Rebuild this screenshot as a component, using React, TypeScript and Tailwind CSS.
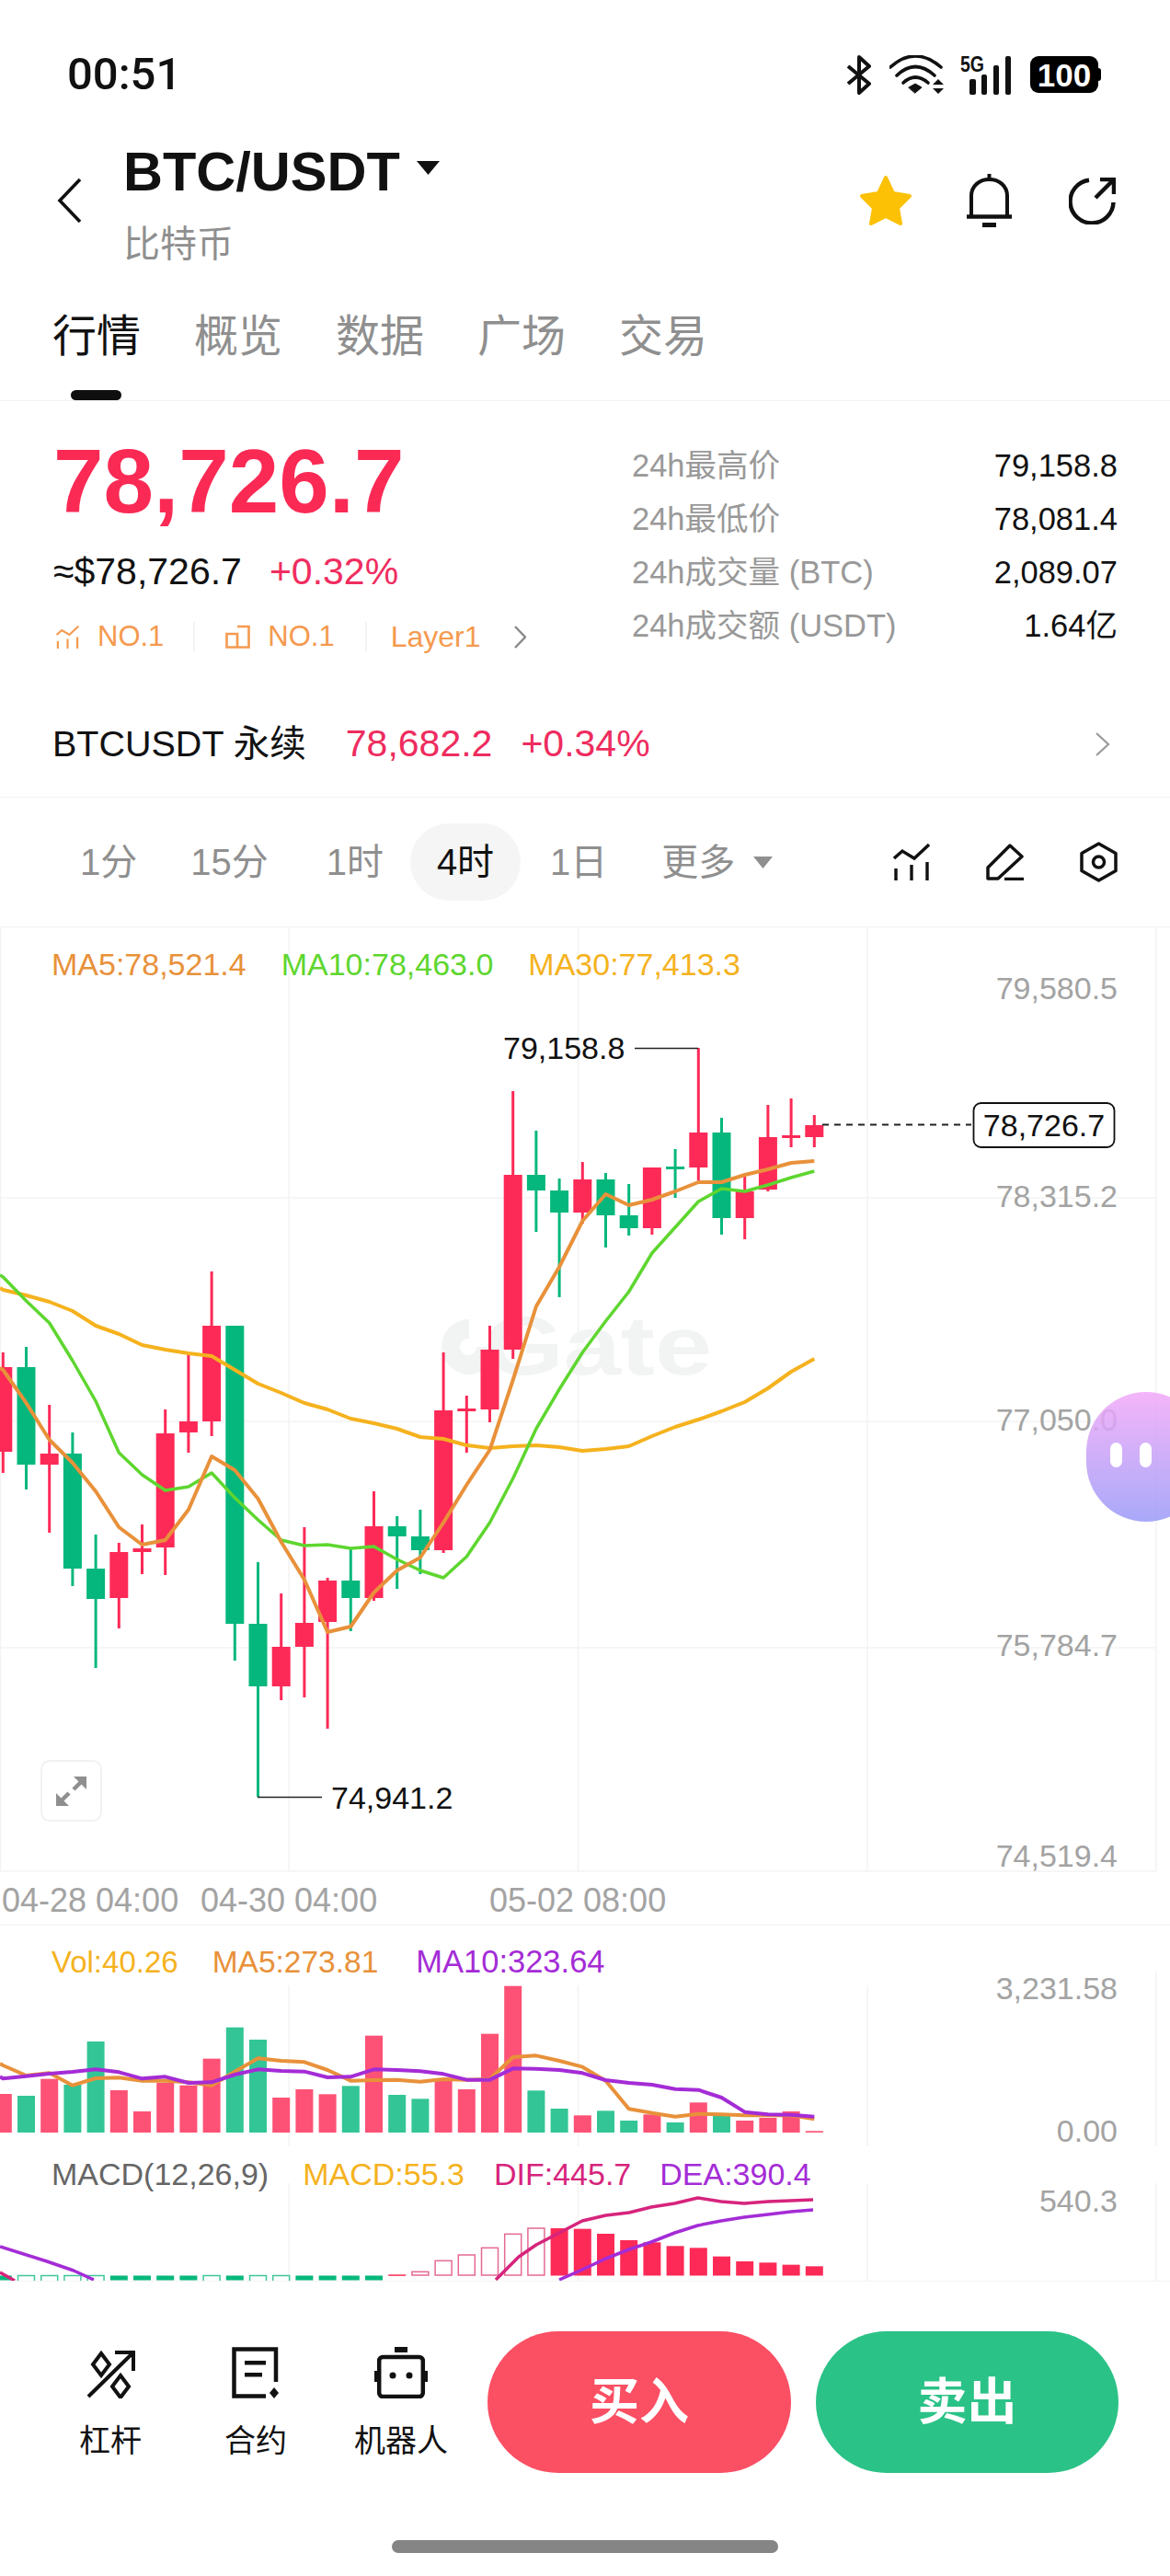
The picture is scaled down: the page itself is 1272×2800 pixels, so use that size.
const RED = "#fd2a57";
const GREEN = "#05b77c";
const VOL_RED = "#fd5275";
const VOL_GREEN = "#33c596";
const MA_ORANGE = "#e8913a";
const MA_GREEN = "#5ed62f";
const MA_YELLOW = "#f5b21e";
const PURPLE = "#a42cd6";
const MAGENTA = "#d6247c";
const GRID = "#f3f3f3";
const AXIS = "#a3a3a3";

const slotX = (i: number) => 3.3 + 25.2 * i;

// [up, high, bodyTop, bodyBottom, low]
const candles: [boolean, number, number, number, number][] = [
  [true, 1470, 1486, 1578, 1601],
  [false, 1464, 1486, 1592, 1619],
  [true, 1527, 1580, 1592, 1666],
  [false, 1557, 1580, 1705, 1724],
  [false, 1668, 1705, 1738, 1813],
  [true, 1677, 1687, 1737, 1770],
  [true, 1657, 1683, 1687, 1711],
  [true, 1532, 1558, 1682, 1712],
  [true, 1471, 1545, 1557, 1579],
  [true, 1382, 1441, 1545, 1561],
  [false, 1441, 1441, 1765, 1805],
  [false, 1698, 1765, 1833, 1953],
  [true, 1732, 1790, 1833, 1848],
  [true, 1660, 1764, 1790, 1845],
  [true, 1715, 1718, 1763, 1879],
  [false, 1683, 1718, 1737, 1773],
  [true, 1621, 1659, 1737, 1740],
  [false, 1648, 1659, 1670, 1727],
  [false, 1641, 1670, 1685, 1711],
  [true, 1470, 1533, 1685, 1688],
  [true, 1517, 1531, 1533, 1579],
  [true, 1441, 1467, 1532, 1546],
  [true, 1186, 1277, 1467, 1477],
  [false, 1229, 1277, 1294, 1339],
  [false, 1281, 1294, 1318, 1410],
  [true, 1263, 1282, 1318, 1330],
  [false, 1275, 1282, 1321, 1356],
  [false, 1287, 1321, 1335, 1343],
  [true, 1269, 1269, 1335, 1342],
  [false, 1249, 1268, 1271, 1302],
  [true, 1139, 1231, 1269, 1283],
  [false, 1215, 1231, 1324, 1342],
  [true, 1279, 1295, 1324, 1347],
  [true, 1201, 1236, 1293, 1295],
  [true, 1194, 1234, 1237, 1247],
  [true, 1212, 1223, 1236, 1247],
];

const ma5 = [1489, 1525, 1565, 1590, 1621, 1660, 1679, 1674, 1641, 1583, 1598, 1629, 1676, 1717, 1774, 1768, 1731, 1707, 1693, 1655, 1614, 1576, 1500, 1420, 1377, 1327, 1298, 1310, 1304, 1295, 1285, 1285, 1277, 1271, 1264, 1262];
const ma10 = [1388, 1414, 1438, 1479, 1523, 1579, 1603, 1620, 1616, 1601, 1628, 1652, 1674, 1680, 1679, 1683, 1681, 1695, 1707, 1715, 1692, 1655, 1607, 1553, 1510, 1470, 1436, 1404, 1362, 1334, 1306, 1292, 1295, 1288, 1280, 1273];
const ma30 = [1402, 1408, 1415, 1425, 1441, 1450, 1462, 1467, 1471, 1474, 1489, 1504, 1514, 1525, 1532, 1542, 1547, 1553, 1562, 1564, 1571, 1574, 1572, 1571, 1573, 1577, 1575, 1572, 1561, 1551, 1543, 1534, 1524, 1509, 1491, 1477];

// volume values are read as top edges of the bars
const volTop = [708, 714, 659, 678, 537, 696, 765, 672, 680, 593, 491, 531, 720, 693, 709, 682, 518, 711, 724, 660, 693, 512, 356, 697, 756, 778, 763, 795, 775, 801, 736, 780, 795, 786, 765, 829].map((z) => 2040 + z / 3);
const volMa5 = [615, 648, 640, 680, 657, 655, 665, 665, 670, 680, 635, 592, 600, 604, 630, 665, 663, 662, 668, 660, 662, 660, 588, 583, 600, 620, 665, 757, 770, 782, 773, 775, 778, 778, 778, 790].map((z) => 2040 + z / 3);
const volMa10 = [658, 650, 642, 636, 628, 637, 658, 652, 672, 670, 645, 628, 633, 635, 654, 652, 628, 630, 634, 643, 662, 662, 625, 626, 630, 640, 663, 672, 678, 692, 695, 720, 767, 775, 776, 782].map((z) => 2040 + z / 3);

// macd bars: hollow flags and tops
const macdTop = [1300, 1300, 1300, 1300, 1300, 1300, 1300, 1300, 1300, 1300, 1300, 1300, 1300, 1300, 1300, 1300, 1300, 1297, 1288, 1252, 1233, 1210, 1165, 1146, 1146, 1148, 1164, 1185, 1192, 1204, 1210, 1238, 1254, 1258, 1265, 1270].map((z) => 2040 + z / 3);
const macdHollow = [false, true, true, true, true, false, false, false, false, true, false, true, true, false, false, false, false, false, true, true, true, true, true, true, false, false, false, false, false, false, false, false, false, false, false, false];

const toPoints = (ys: number[]) => `0,${ys[0] - 2} ` + ys.map((y, i) => `${slotX(i)},${y}`).join(" ");

function Chevron({ className = "" }: { className?: string }) {
  return (
    <svg viewBox="0 0 13 25" fill="none" stroke="#8a8a8a" strokeWidth="2.5" className={className}>
      <path d="M1 1 L12 12.5 L1 24" />
    </svg>
  );
}

function ChartLinesIcon({ className = "", stroke = "#111", width = 3 }: { className?: string; stroke?: string; width?: number }) {
  return (
    <svg viewBox="0 0 40 40" fill="none" stroke={stroke} strokeWidth={width} className={className}>
      {/* zigzag with three bars */}
      <path d="M1 16 L10 8 L23 16 L39 1" />
      <path d="M3 27 V40 M20 23 V40 M37 20 V40" />
    </svg>
  );
}

function StatusBar() {
  return (
    <div className="flex h-[157px] items-start pt-[50px] pl-[73px] pr-[75px]">
      <div className="flex h-[62px] w-full items-center">
        <span className="font-['Roboto',sans-serif] text-[49px] leading-[62px] font-medium text-[#111]">00:51</span>
        <div className="ml-auto flex items-center">
          <svg viewBox="0 0 27 43" fill="none" stroke="#111" strokeWidth="4" className="h-[43px] w-[27px]">
            <path d="M2 12 L25 31 L14 41 V2 L25 12 L2 31" strokeLinejoin="round" />
          </svg>
          <svg viewBox="0 0 60 43" fill="none" stroke="#111" strokeWidth="3.6" strokeLinecap="round" className="ml-[20px] h-[43px] w-[60px]">
            <path d="M1 13 Q28 -11 56 13" />
            <path d="M8 22 Q28 3 49 22" />
            <path d="M15 30 Q28 18 42 30" />
            <path d="M21 35 L28 31 L35 35 L28 41 Z" fill="#111" stroke="#111" strokeWidth="1" />
            <path d="M47 32 L53 26 L59 32 Z M47 36 H59 L53 42 Z" fill="#111" stroke="none" />
          </svg>
          <svg viewBox="0 -8 57 51" className="-mt-[8px] ml-[17px] h-[51px] w-[57px]">
            <text x="0" y="18" fontSize="23" fontWeight="700" fill="#111" textLength="26" lengthAdjust="spacingAndGlyphs">5G</text>
            <rect x="10" y="26" width="7" height="17" rx="2" fill="#111" />
            <rect x="23" y="21" width="6" height="22" rx="2" fill="#111" />
            <rect x="36" y="11" width="6" height="32" rx="2" fill="#111" />
            <rect x="49" y="1" width="6" height="42" rx="2" fill="#111" />
          </svg>
          <div className="ml-[19px] flex items-center">
            <div className="flex h-[40px] w-[74px] items-center justify-center rounded-[9px] bg-black text-[35px] leading-none font-bold text-white">100</div>
            <div className="h-[14px] w-[3px] rounded-r-full bg-black" />
          </div>
        </div>
      </div>
    </div>
  );
}

function Header() {
  return (
    <div className="flex items-center pl-[62px] pr-[59px]">
      <svg viewBox="0 0 27 50" fill="none" stroke="#111" strokeWidth="3.6" className="mb-[8px] h-[50px] w-[27px]">
        <path d="M25 2 L3 25 L25 48" />
      </svg>
      <div className="ml-[45px] flex flex-col">
        <div className="flex h-[60px] items-center">
          <span className="text-[59.5px] leading-[60px] font-bold text-[#111]">BTC/USDT</span>
          <svg viewBox="0 0 25 15" className="mb-[10px] ml-[18px] h-[15px] w-[25px]">
            <polygon points="0,0 25,0 12.5,15" fill="#111" />
          </svg>
        </div>
        <span className="mt-[26px] text-[40px] leading-[44px] text-[#8f8f8f]">比特币</span>
      </div>
      <div className="mb-[8px] ml-auto flex items-center">
        <svg viewBox="0 0 58 56" className="h-[56px] w-[58px]">
          <polygon points="29,3 37,20 55,23 42,36 45,53 29,45 13,53 16,36 3,23 21,20" fill="#fcc005" stroke="#fcc005" strokeWidth="4" strokeLinejoin="round" />
        </svg>
        <svg viewBox="0 0 49 59" fill="none" stroke="#111" strokeWidth="4" className="ml-[59px] h-[59px] w-[49px]">
          <path d="M24.5 0 V6" />
          <path d="M5 46 V24 C5 13 14 6 24.5 6 C35 6 44 13 44 24 V46" />
          <path d="M0 46.5 H49" strokeWidth="4.5" />
          <rect x="17" y="53" width="15" height="5" fill="#111" stroke="none" />
        </svg>
        <svg viewBox="0 0 51 51" fill="none" stroke="#111" strokeWidth="4.5" className="ml-[62px] h-[51px] w-[51px]">
          <path d="M22 2.7 A23.5 23.5 0 1 0 48.5 27" />
          <path d="M29 22 L49 2 M34 2 H49 V18" />
        </svg>
      </div>
    </div>
  );
}

function Tabs() {
  const rest = ["概览", "数据", "广场", "交易"];
  return (
    <div className="flex h-[149px] gap-[58px] border-b border-[#f2f2f2] pt-[49px] pl-[57px]">
      <div className="relative text-[48px] leading-[60px] text-[#111]">
        行情
        <span className="absolute bottom-0 left-[20px] h-[11px] w-[55px] rounded-full bg-[#0f0f0f]" />
      </div>
      {rest.map((tab) => (
        <div key={tab} className="text-[48px] leading-[60px] text-[#8f8f8f]">
          {tab}
        </div>
      ))}
    </div>
  );
}

const stats = [
  ["24h最高价", "79,158.8"],
  ["24h最低价", "78,081.4"],
  ["24h成交量 (BTC)", "2,089.07"],
  ["24h成交额 (USDT)", "1.64亿"],
];

function Stats() {
  return (
    <div className="flex h-[316px] pr-[57px] pl-[58px]">
      <div className="flex w-[629px] flex-col pt-[37px]">
        <div className="text-[98px] leading-[100px] font-bold text-[#fa2a55]">78,726.7</div>
        <div className="mt-[23px] flex text-[41px] leading-[50px]">
          <span className="text-[#111]">≈$78,726.7</span>
          <span className="ml-[30px] text-[#f02d5f]">+0.32%</span>
        </div>
        <div className="mt-[26px] flex h-[40px] items-center text-[31px] text-[#f59a50]">
          <ChartLinesIcon className="ml-[3px] h-[25px] w-[25px]" stroke="#f59a50" width={3.5} />
          <span className="ml-[20px]">NO.1</span>
          <span className="ml-[32px] h-[33px] w-[2px] bg-[#f4f4f4]" />
          <svg viewBox="0 0 27 26" fill="none" stroke="#f59a50" strokeWidth="2.6" className="ml-[33px] h-[26px] w-[27px]">
            <path d="M1.5 10 H13 V24.5 H1.5 Z M13 2 H25.5 V24.5 H13" />
          </svg>
          <span className="ml-[19px]">NO.1</span>
          <span className="ml-[33px] h-[33px] w-[2px] bg-[#f4f4f4]" />
          <span className="ml-[26px] text-[32px]">Layer1</span>
          <Chevron className="ml-[36px] h-[25px] w-[13px]" />
        </div>
      </div>
      <div className="flex flex-1 flex-col pt-[42px]">
        {stats.map(([label, value]) => (
          <div key={label} className="flex h-[58px] items-center justify-between text-[34.5px]">
            <span className="text-[#999]">{label}</span>
            <span className="text-[#111]">{value}</span>
          </div>
        ))}
      </div>
    </div>
  );
}

function PerpRow() {
  return (
    <div className="flex h-[115px] items-center border-b border-[#f2f2f2] pr-[65px] pl-[57px] text-[41px]">
      <span className="text-[39.5px] text-[#111]">BTCUSDT 永续</span>
      <span className="ml-[43px] text-[#ee2c5e]">78,682.2</span>
      <span className="ml-[31px] text-[#ee2c5e]">+0.34%</span>
      <svg viewBox="0 0 17 26" fill="none" stroke="#999" strokeWidth="2.2" className="ml-auto h-[26px] w-[17px]">
        <path d="M2 1 L15 13 L2 25" />
      </svg>
    </div>
  );
}

function IntervalRow() {
  return (
    <div className="flex h-[141px] items-center border-b border-[#f2f2f2] pr-[57px] pl-[87px] text-[40px] text-[#8f8f8f]">
      <span>1分</span>
      <span className="ml-[58px]">15分</span>
      <span className="ml-[63px]">1时</span>
      <span className="ml-[29px] flex h-[84px] w-[120px] items-center justify-center rounded-full bg-[#f5f5f5] text-[#111]">4时</span>
      <span className="ml-[32px]">1日</span>
      <span className="ml-[59px]">更多</span>
      <svg viewBox="0 0 21 13" className="ml-[20px] h-[13px] w-[21px]">
        <polygon points="0,0 21,0 10.5,13" fill="#8f8f8f" />
      </svg>
      <div className="ml-auto flex items-center gap-[61px]">
        <ChartLinesIcon className="h-[40px] w-[40px]" width={3.4} />
        <svg viewBox="0 0 41 40" fill="none" stroke="#111" strokeWidth="3.5" strokeLinejoin="round" className="h-[40px] w-[41px]">
          <path d="M26 2 L39 14 L13 38 H2 V26 Z" />
          <path d="M20 38.5 H41" />
        </svg>
        <svg viewBox="0 0 41 44" fill="none" stroke="#111" strokeWidth="3.5" strokeLinejoin="round" className="h-[44px] w-[41px]">
          <path d="M20.5 2 L39 12.5 V31.5 L20.5 42 L2 31.5 V12.5 Z" />
          <circle cx="20.5" cy="22" r="6" />
        </svg>
      </div>
    </div>
  );
}

function MainChart() {
  const verticals = [0.5, 314, 628.5, 943, 1257];
  const horizontals = [1302, 1545, 1791, 2034];
  const axis = [
    ["79,580.5", 1086],
    ["78,315.2", 1312],
    ["77,050.0", 1555],
    ["75,784.7", 1800],
    ["74,519.4", 2029],
  ] as const;
  return (
    <div className="relative h-[1085px] border-b border-[#f2f2f2]">
      <svg viewBox="0 1008 1272 1085" className="absolute inset-0 h-[1085px] w-[1272px]">
        {verticals.map((x) => (
          <line key={x} x1={x} x2={x} y1="1008" y2="2034" stroke={GRID} strokeWidth="1.5" />
        ))}
        {horizontals.map((y) => (
          <line key={y} x1="0" x2="1257" y1={y} y2={y} stroke={GRID} strokeWidth="1.5" />
        ))}

        {/* watermark */}
        <g fill="#f2f3f3">
          <path d="M510 1434 A30 30 0 1 0 540 1464 L518 1464 A9 9 0 1 1 510 1455 Z" />
          <text x="526" y="1494" fontSize="90" fontWeight="700" textLength="248" lengthAdjust="spacingAndGlyphs">Gate</text>
        </g>

        {candles.map(([up, high, top, bottom, low], i) => {
          const color = up ? RED : GREEN;
          const x = slotX(i);
          return (
            <g key={i} fill={color}>
              <rect x={x - 1.5} y={high} width="3" height={low - high} />
              <rect x={x - 10} y={top} width="20" height={Math.max(bottom - top, 3)} />
            </g>
          );
        })}

        <g fill="none" strokeLinejoin="round">
          <polyline points={toPoints(ma30)} stroke={MA_YELLOW} strokeWidth="4" />
          <polyline points={toPoints(ma10)} stroke={MA_GREEN} strokeWidth="3.5" />
          <polyline points={toPoints(ma5)} stroke={MA_ORANGE} strokeWidth="4" />
        </g>

        {/* high / low markers */}
        <path d="M690 1139.5 H759" stroke="#222" strokeWidth="1.5" fill="none" />
        <text x="547" y="1151" fontSize="34" fill="#111">79,158.8</text>
        <path d="M280 1953.5 H350" stroke="#222" strokeWidth="1.5" fill="none" />
        <text x="360" y="1966" fontSize="34" fill="#111">74,941.2</text>

        {/* last price */}
        <line x1="894" x2="1056" y1="1222.5" y2="1222.5" stroke="#222" strokeWidth="1.8" strokeDasharray="7 6" />
        <rect x="1058.5" y="1199" width="153" height="48" rx="8" fill="#fff" stroke="#111" strokeWidth="1.8" />
        <text x="1135" y="1235" fontSize="34" fill="#111" textAnchor="middle">78,726.7</text>

        {axis.map(([label, y]) => (
          <text key={label} x="1215" y={y} fontSize="34" fill={AXIS} textAnchor="end">
            {label}
          </text>
        ))}
        {["04-28 04:00", "04-30 04:00", "05-02 08:00"].map((label, i) => (
          <text key={label} x={[2, 218, 532][i]} y="2078" fontSize="36" fill={AXIS}>
            {label}
          </text>
        ))}
      </svg>

      <div className="relative flex h-[80px] items-center gap-[38px] pl-[56px] text-[34px]">
        <span className="text-[#e8913a]">MA5:78,521.4</span>
        <span className="text-[#5ed62f]">MA10:78,463.0</span>
        <span className="text-[#f5b21e]">MA30:77,413.3</span>
      </div>

      <div className="absolute top-[905px] left-[44px] flex h-[67px] w-[67px] items-center justify-center rounded-[10px] border-2 border-[#f1f1f1] bg-white">
        <svg viewBox="0 0 33 32" fill="#8f8f8f" stroke="#8f8f8f" className="h-[32px] w-[33px]">
          <polygon points="19,0 33,0 33,14" strokeWidth="0" />
          <polygon points="0,32 0,18 14,32" strokeWidth="0" />
          <path d="M27 6 L19 14 M6 26 L14 18" fill="none" strokeWidth="4.5" />
        </svg>
      </div>

      <div className="absolute top-[505px] left-[1181px] flex h-[141px] w-[130px] items-center gap-[19px] rounded-full bg-gradient-to-b from-[#f2a8f8] to-[#9a9af8] pb-[4px] pl-[26px] opacity-[0.85]">
        <span className="h-[27px] w-[13px] rounded-full bg-white" />
        <span className="h-[27px] w-[13px] rounded-full bg-white" />
      </div>
    </div>
  );
}

function VolumeChart() {
  return (
    <div className="relative h-[240px]">
      <svg viewBox="0 2093 1272 240" className="absolute inset-0 h-[240px] w-[1272px] overflow-visible">
        {[314, 628.5, 943].map((x) => (
          <line key={x} x1={x} x2={x} y1="2158" y2="2333" stroke={GRID} strokeWidth="1.5" />
        ))}
        <line x1="1257" x2="1257" y1="2143" y2="2333" stroke={GRID} strokeWidth="1.5" />
        {volTop.map((top, i) => (
          <rect key={i} x={slotX(i) - 9.5} y={top} width="19" height={2318 - top} fill={candles[i][0] ? VOL_RED : VOL_GREEN} />
        ))}
        <g fill="none" strokeLinejoin="round">
          <polyline points={toPoints(volMa5)} stroke={MA_ORANGE} strokeWidth="4" />
          <polyline points={toPoints(volMa10)} stroke={PURPLE} strokeWidth="4" />
        </g>
        <text x="1215" y="2173" fontSize="34" fill={AXIS} textAnchor="end">3,231.58</text>
        <text x="1215" y="2328" fontSize="34" fill={AXIS} textAnchor="end">0.00</text>
      </svg>
      <div className="relative flex h-[80px] items-center pl-[56px]">
        <span className="text-[33px] text-[#f5b21e]">Vol:40.26</span>
        <span className="ml-[37px] text-[33.5px] text-[#e8913a]">MA5:273.81</span>
        <span className="ml-[41px] text-[34.5px] text-[#a42cd6]">MA10:323.64</span>
      </div>
    </div>
  );
}

function MacdChart() {
  const dif = "539,2478 564,2453 583,2440 608,2427 633,2414 658.6,2408 684,2405 708,2399 733.5,2395 758.6,2389 784,2393 809,2395 835,2393 860,2392 884,2391";
  const dea = "608,2478 633,2467 658.6,2455 684,2445 708,2437 733.5,2427 758.6,2419 784,2414 809,2410 835,2407 860,2404 884,2402";
  return (
    <div className="relative h-[146px] overflow-hidden">
      <svg viewBox="0 2333 1272 146" className="absolute inset-0 h-[146px] w-[1272px]">
        {[314, 628.5, 943, 1257].map((x) => (
          <line key={x} x1={x} x2={x} y1="2373" y2="2479" stroke={GRID} strokeWidth="1.5" />
        ))}
        {macdTop.map((top, i) => {
          const hollow = macdHollow[i];
          if (i < 17) {
            return hollow ? (
              <rect key={i} x={slotX(i) - 9} y="2473.5" width="18" height="10" fill="none" stroke="#3fc79b" strokeWidth="1.5" />
            ) : (
              <rect key={i} x={slotX(i) - 9.5} y="2473.5" width="19" height="5" fill={i === 9 ? "#f6c6d3" : GREEN} />
            );
          }
          if (hollow) {
            return <rect key={i} x={slotX(i) - 9} y={top} width="18" height={2473 - top} fill="none" stroke="#e46a92" strokeWidth="1.5" />;
          }
          return <rect key={i} x={slotX(i) - 9.5} y={top} width="19" height={Math.max(2473.5 - top, 1.5)} fill={RED} />;
        })}
        <g fill="none" strokeLinejoin="round" strokeWidth="3.5">
          <polyline points="0,2470 16,2479" stroke={MAGENTA} />
          <polyline points="0,2442 51,2458 80,2468 102,2478" stroke={PURPLE} />
          <polyline points={dif} stroke={MAGENTA} />
          <polyline points={dea} stroke={PURPLE} />
        </g>
        <text x="1215" y="2404" fontSize="34" fill={AXIS} textAnchor="end">540.3</text>
      </svg>
      <div className="relative flex h-[60px] items-center pl-[56px] text-[34px]">
        <span className="text-[#666]">MACD(12,26,9)</span>
        <span className="ml-[37px] text-[#f5b21e]">MACD:55.3</span>
        <span className="ml-[32px] text-[#d6247c]">DIF:445.7</span>
        <span className="ml-[31px] text-[#a42cd6]">DEA:390.4</span>
      </div>
    </div>
  );
}

function BottomBar() {
  return (
    <div className="border-t border-[#f3f3f3]">
      <div className="flex pt-[54px] pl-[41px]">
        <div className="flex w-[158px] flex-col items-center pt-[17px]">
          <div className="flex h-[56px] items-end">
            <svg viewBox="0 0 53 52" fill="none" stroke="#111" strokeWidth="4" className="h-[52px] w-[53px]">
              <path d="M2 50 L51 2 M31 2 H51 V22" />
              <path d="M16 3 L25 15 L16 27 L7 15 Z" />
              <path d="M37 27 L46 39 L37 51 L28 39 Z" />
            </svg>
          </div>
          <span className="mt-[26px] text-[34px] leading-[40px] text-[#111]">杠杆</span>
        </div>
        <div className="flex w-[158px] flex-col items-center pt-[17px]">
          <svg viewBox="0 0 52 56" fill="none" stroke="#111" strokeWidth="4.5" className="h-[56px] w-[52px]">
            <path d="M48 38 V2.5 H2.5 V53.5 H37" />
            <rect x="14" y="15" width="23" height="4.5" fill="#111" stroke="none" />
            <rect x="14" y="28" width="19" height="4.5" fill="#111" stroke="none" />
            <polygon points="46,44 51,50 46,56 41,50" fill="#111" stroke="none" />
          </svg>
          <span className="mt-[26px] text-[34px] leading-[40px] text-[#111]">合约</span>
        </div>
        <div className="flex w-[158px] flex-col items-center pt-[17px]">
          <svg viewBox="0 0 58 56" fill="none" stroke="#111" strokeWidth="4.5" className="h-[56px] w-[58px]">
            <rect x="22" y="0" width="14" height="6" fill="#111" stroke="none" />
            <rect x="5.2" y="11" width="47.6" height="43" rx="4" />
            <rect x="0" y="26" width="3" height="12" fill="#111" stroke="none" />
            <rect x="55" y="26" width="3" height="12" fill="#111" stroke="none" />
            <circle cx="20" cy="31" r="3.5" fill="#111" stroke="none" />
            <circle cx="38" cy="31" r="3.5" fill="#111" stroke="none" />
          </svg>
          <span className="mt-[26px] text-[34px] leading-[40px] text-[#111]">机器人</span>
        </div>
        <button className="ml-[15px] flex h-[154px] w-[330px] items-center justify-center rounded-full bg-[#fb4f64] text-[54px] font-bold text-white">买入</button>
        <button className="ml-[27px] flex h-[154px] w-[329px] items-center justify-center rounded-full bg-[#2bc287] text-[54px] font-bold text-white">卖出</button>
      </div>
      <div className="mx-auto mt-[73px] h-[14px] w-[420px] rounded-full bg-[#858585]" />
    </div>
  );
}

export default function App() {
  return (
    <div className="h-[2800px] w-[1272px] overflow-hidden bg-white font-['Liberation_Sans','Noto_Sans_CJK_SC',sans-serif]">
      <StatusBar />
      <Header />
      <Tabs />
      <Stats />
      <PerpRow />
      <IntervalRow />
      <MainChart />
      <VolumeChart />
      <MacdChart />
      <BottomBar />
    </div>
  );
}
